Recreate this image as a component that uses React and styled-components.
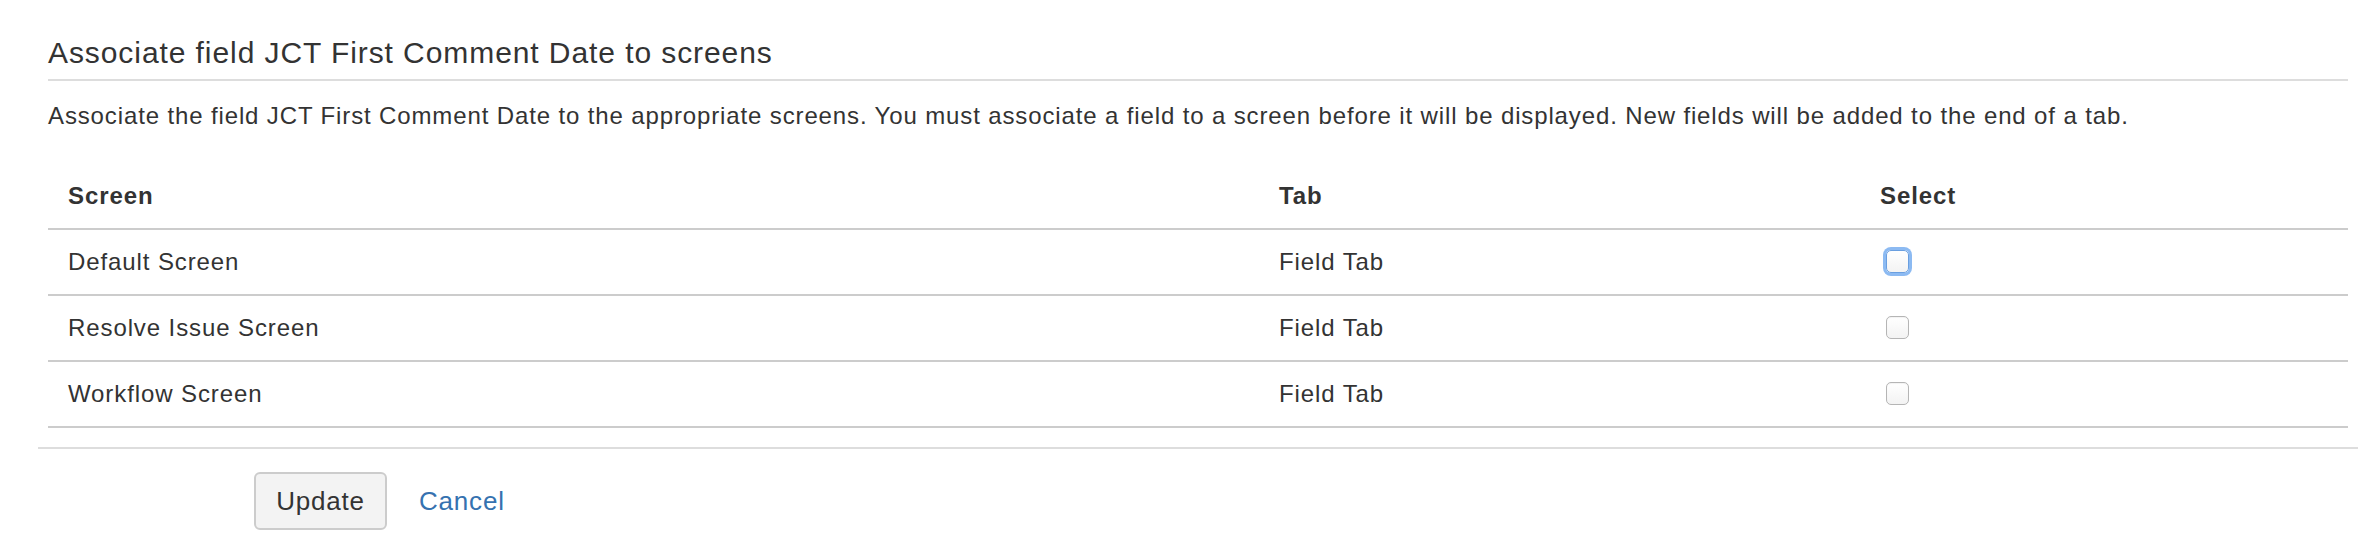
import React from "react";
import styled, { createGlobalStyle } from "styled-components";

const GlobalStyle = createGlobalStyle`
  body {
    margin: 0;
    background: #fff;
    color: #333;
    font-family: "Liberation Sans", Arial, sans-serif;
  }
`;

const Page = styled.div`
  padding: 35px 0 0 48px;
  width: 2300px;
`;

const Heading = styled.h2`
  margin: 0;
  padding-bottom: 8px;
  font-size: 30px;
  font-weight: normal;
  letter-spacing: 0.92px;
  line-height: 36px;
  border-bottom: 2px solid #ddd;
`;

const Description = styled.p`
  margin: 18px 0 32px;
  font-size: 24px;
  letter-spacing: 0.87px;
  line-height: 33px;
`;

const Table = styled.table`
  width: 100%;
  table-layout: fixed;
  border-collapse: collapse;
  font-size: 24px;
  letter-spacing: 0.9px;
  line-height: 33px;
`;

const Th = styled.th`
  box-sizing: border-box;
  width: ${(p) => p.$width}px;
  padding: 15px 20px 16px;
  text-align: left;
  font-weight: bold;
  border-bottom: 2px solid #ccc;
`;

const Td = styled.td`
  padding: 15px 20px 16px;
  border-bottom: 2px solid #ccc;
  vertical-align: middle;
`;

const Checkbox = styled.input.attrs({ type: "checkbox" })`
  appearance: none;
  display: block;
  margin: 0 0 0 6px;
  width: 23px;
  height: 23px;
  border-radius: 5px;
  border: 1px solid ${(p) => (p.$focused ? "#6a9fe0" : "#b5b5b5")};
  background: linear-gradient(#ffffff, #f3f3f3);
  box-shadow: ${(p) =>
    p.$focused ? "0 0 0 3px #8cbaf2" : "inset 0 1px 1px rgba(0,0,0,0.05)"};
`;

const Footer = styled.div`
  margin: 19px -10px 0;
  border-top: 2px solid #ddd;
  padding: 23px 0 0 216px;
  display: flex;
  align-items: center;
  gap: 32px;
`;

const Button = styled.button`
  height: 58px;
  width: 133px;
  padding: 0;
  border: 2px solid #ccc;
  border-radius: 6px;
  background: #f3f3f3;
  color: #333;
  font-family: "Liberation Sans", Arial, sans-serif;
  font-size: 26px;
  letter-spacing: 0.8px;
`;

const CancelLink = styled.a`
  color: #3572b0;
  font-size: 26px;
  letter-spacing: 0.8px;
  text-decoration: none;
`;

const rows = ["Default Screen", "Resolve Issue Screen", "Workflow Screen"];

export default function App() {
  return (
    <>
      <GlobalStyle />
      <Page>
        <Heading>Associate field JCT First Comment Date to screens</Heading>
        <Description>
          Associate the field JCT First Comment Date to the appropriate screens.
          You must associate a field to a screen before it will be displayed.
          New fields will be added to the end of a tab.
        </Description>
        <Table>
          <thead>
            <tr>
              <Th $width={1211}>Screen</Th>
              <Th $width={601}>Tab</Th>
              <Th $width={488}>Select</Th>
            </tr>
          </thead>
          <tbody>
            {rows.map((name, i) => (
              <tr key={name}>
                <Td>{name}</Td>
                <Td>Field Tab</Td>
                <Td>
                  <Checkbox $focused={i === 0} />
                </Td>
              </tr>
            ))}
          </tbody>
        </Table>
        <Footer>
          <Button>Update</Button>
          <CancelLink href="#">Cancel</CancelLink>
        </Footer>
      </Page>
    </>
  );
}
